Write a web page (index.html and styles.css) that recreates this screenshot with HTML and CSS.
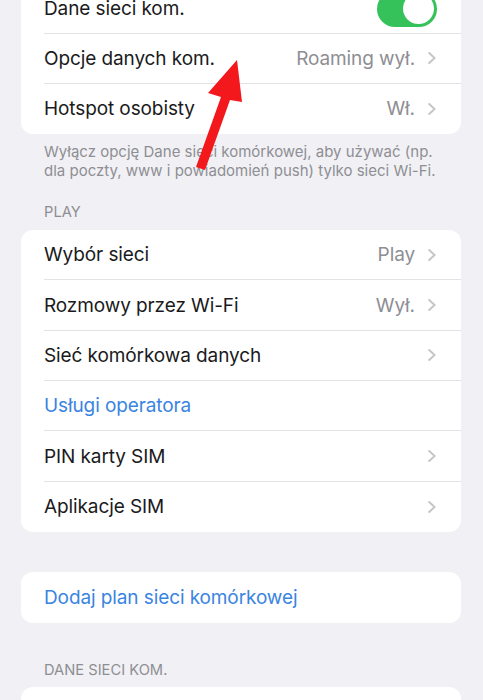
FILE: index.html
```html
<!DOCTYPE html>
<html lang="pl">
<head>
<meta charset="utf-8">
<title>Sieć komórkowa</title>
<link rel="stylesheet" href="styles.css">
</head>
<body>
<main class="page">
  <section class="card card-first">
    <div class="row row-first"><span class="label">Dane sieci kom.</span><span class="toggle"><span class="knob"></span></span></div>
    <div class="row"><span class="label">Opcje danych kom.</span><span class="value">Roaming wył.</span><svg class="chev" viewBox="0 0 8 12"><path d="M1.2 1 L6.6 6 L1.2 11"/></svg></div>
    <div class="row"><span class="label">Hotspot osobisty</span><span class="value">Wł.</span><svg class="chev" viewBox="0 0 8 12"><path d="M1.2 1 L6.6 6 L1.2 11"/></svg></div>
  </section>
  <p class="footer">Wyłącz opcję Dane sieci komórkowej, aby używać (np. dla poczty, www i powiadomień push) tylko sieci Wi-Fi.</p>

  <h2 class="header header-play">PLAY</h2>
  <section class="card">
    <div class="row"><span class="label">Wybór sieci</span><span class="value">Play</span><svg class="chev" viewBox="0 0 8 12"><path d="M1.2 1 L6.6 6 L1.2 11"/></svg></div>
    <div class="row"><span class="label">Rozmowy przez Wi-Fi</span><span class="value">Wył.</span><svg class="chev" viewBox="0 0 8 12"><path d="M1.2 1 L6.6 6 L1.2 11"/></svg></div>
    <div class="row"><span class="label">Sieć komórkowa danych</span><svg class="chev" viewBox="0 0 8 12"><path d="M1.2 1 L6.6 6 L1.2 11"/></svg></div>
    <div class="row"><span class="label link">Usługi operatora</span></div>
    <div class="row"><span class="label">PIN karty SIM</span><svg class="chev" viewBox="0 0 8 12"><path d="M1.2 1 L6.6 6 L1.2 11"/></svg></div>
    <div class="row"><span class="label">Aplikacje SIM</span><svg class="chev" viewBox="0 0 8 12"><path d="M1.2 1 L6.6 6 L1.2 11"/></svg></div>
  </section>

  <section class="card card-add">
    <div class="row"><span class="label link">Dodaj plan sieci komórkowej</span></div>
  </section>

  <h2 class="header header-data">DANE SIECI KOM.</h2>
  <section class="card card-last">
    <div class="row"><span class="label">&nbsp;</span></div>
  </section>
</main>
<svg class="arrow" width="483" height="700" viewBox="0 0 483 700" aria-hidden="true">
  <polygon points="237,60 208,93 221,97 196,167 205,170 230,100 242,102" fill="#f2181c"/>
</svg>
</body>
</html>
```
FILE: styles.css
```css
html, body {
  margin: 0;
  padding: 0;
}
body {
  background: #f1f1f5;
  font-family: Inter, "Noto Sans", "Liberation Sans", sans-serif;
  color: #1a1a1c;
  overflow: hidden;
  width: 483px;
  height: 700px;
  position: relative;
}
.page {
  display: flex;
  flex-direction: column;
  padding: 0 22px 0 21px;
}
.card {
  background: #ffffff;
  border-radius: 12px;
  display: flex;
  flex-direction: column;
  overflow: hidden;
}
.card-first {
  margin-top: -18px;
}
.row {
  height: 50.33px;
  box-sizing: border-box;
  display: flex;
  align-items: center;
  margin-left: 23px;
  padding-right: 25px;
  border-bottom: 1px solid #e3e3e7;
}
.row-first {
  height: 51.5px;
  padding-top: 3px;
}
.row:last-child {
  border-bottom: none;
}
.label {
  flex: 1;
  font-size: 19px;
  letter-spacing: -0.1px;
  white-space: nowrap;
}
.link {
  color: #3a84e2;
}
.value {
  font-size: 19px;
  color: #8e8e93;
  margin-right: 13px;
  letter-spacing: -0.1px;
}
.chev {
  width: 8px;
  height: 12px;
  flex: none;
  fill: none;
  stroke: #c6c6ca;
  stroke-width: 2;
  stroke-linecap: round;
  stroke-linejoin: round;
}
.toggle {
  width: 60px;
  height: 36px;
  border-radius: 18px;
  background: #36c25a;
  display: flex;
  align-items: center;
  justify-content: flex-end;
  padding: 0 3px;
  box-sizing: border-box;
  margin-right: -1px;
}
.knob {
  width: 31px;
  height: 31px;
  border-radius: 50%;
  background: #fff;
}
.footer {
  margin: 8px 17px 0 23px;
  font-size: 15px;
  line-height: 19px;
  color: #8e8e93;
}
.header {
  margin: 0;
  padding-left: 23px;
  font-size: 14.7px;
  font-weight: 400;
  line-height: 17px;
  color: #8e8e93;
}
.header-play {
  margin-top: 24px;
  margin-bottom: 9px;
}
.card-add {
  margin-top: 40px;
}
.card-add .row {
  height: 51px;
}
.header-data {
  margin-top: 39px;
  margin-bottom: 8px;
}
.arrow {
  position: absolute;
  left: 0;
  top: 0;
  pointer-events: none;
}
```
